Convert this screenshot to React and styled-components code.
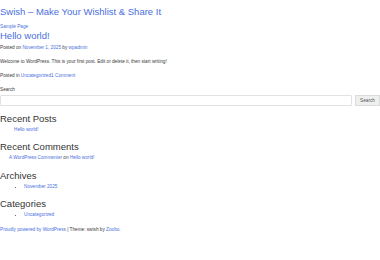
import React from 'react';
import styled, { createGlobalStyle } from 'styled-components';

const GlobalStyle = createGlobalStyle`
  body {
    margin: 0;
    background: #fff;
    font-family: "Liberation Sans", Arial, sans-serif;
    color: #3a3a3a;
  }
  a {
    color: #4a6fe0;
    text-decoration: none;
  }
`;

const Page = styled.div`
  display: flex;
  flex-direction: column;
`;

const SiteTitle = styled.a`
  display: block;
  margin-top: 6px;
  font-size: 9.5px;
  line-height: 12px;
`;

const Nav = styled.nav`
  margin-top: 6px;
  font-size: 4.7px;
  line-height: 6px;
`;

const PostTitle = styled.h2`
  margin: 0;
  font-size: 9.5px;
  line-height: 12px;
  font-weight: normal;
`;

const Small = styled.p`
  margin: ${(p) => p.$gap || 8}px 0 0;
  font-size: 4.7px;
  line-height: 6px;
  em { font-style: italic; }
`;

const SearchLabel = styled.label`
  display: block;
  margin-top: 8px;
  font-size: 4.7px;
  line-height: 6px;
`;

const SearchRow = styled.div`
  display: flex;
  gap: 3px;
  margin-top: 2px;
  align-items: stretch;
`;

const SearchInput = styled.div`
  flex: 1;
  height: 9px;
  border: 1px solid #e2e2e2;
  border-radius: 1px;
`;

const SearchButton = styled.div`
  width: 23px;
  height: 9px;
  border: 1px solid #dcdcdc;
  background: #efefef;
  color: #555;
  font-size: 4.7px;
  line-height: 9px;
  text-align: center;
`;

const WidgetTitle = styled.h2`
  margin: ${(p) => p.$gap || 8}px 0 0;
  font-size: 9.5px;
  line-height: 12px;
  font-weight: normal;
  color: #333;
`;

const List = styled.ul`
  margin: 2px 0 0;
  padding-left: ${(p) => p.$indent}px;
  list-style: ${(p) => (p.$bullets ? 'disc' : 'none')};
  font-size: 4.7px;
  line-height: 6px;
`;

const Footer = styled.footer`
  margin-top: 9px;
  font-size: 4.7px;
  line-height: 6px;
`;

export default function App() {
  return (
    <Page>
      <GlobalStyle />
      <SiteTitle href="#">Swish – Make Your Wishlist &amp; Share It</SiteTitle>
      <Nav><a href="#">Sample Page</a></Nav>

      <PostTitle><a href="#">Hello world!</a></PostTitle>
      <Small $gap={3}>Posted on <a href="#">November 1, 2025</a> by <a href="#">wpadmin</a></Small>
      <Small>Welcome to WordPress. This is your first post. Edit or delete it, then start writing!</Small>
      <Small>Posted in <a href="#">Uncategorized</a><a href="#">1 Comment</a></Small>

      <SearchLabel>Search</SearchLabel>
      <SearchRow>
        <SearchInput />
        <SearchButton>Search</SearchButton>
      </SearchRow>

      <WidgetTitle $gap={7}>Recent Posts</WidgetTitle>
      <List $indent={14}><li><a href="#">Hello world!</a></li></List>

      <WidgetTitle>Recent Comments</WidgetTitle>
      <List $indent={9}><li><a href="#">A WordPress Commenter</a> on <a href="#">Hello world!</a></li></List>

      <WidgetTitle $gap={9}>Archives</WidgetTitle>
      <List $indent={24} $bullets><li><a href="#">November 2025</a></li></List>

      <WidgetTitle>Categories</WidgetTitle>
      <List $indent={24} $bullets><li><a href="#">Uncategorized</a></li></List>

      <Footer><a href="#">Proudly powered by WordPress</a> | Theme: swish by <a href="#">Zoobo</a>.</Footer>
    </Page>
  );
}
